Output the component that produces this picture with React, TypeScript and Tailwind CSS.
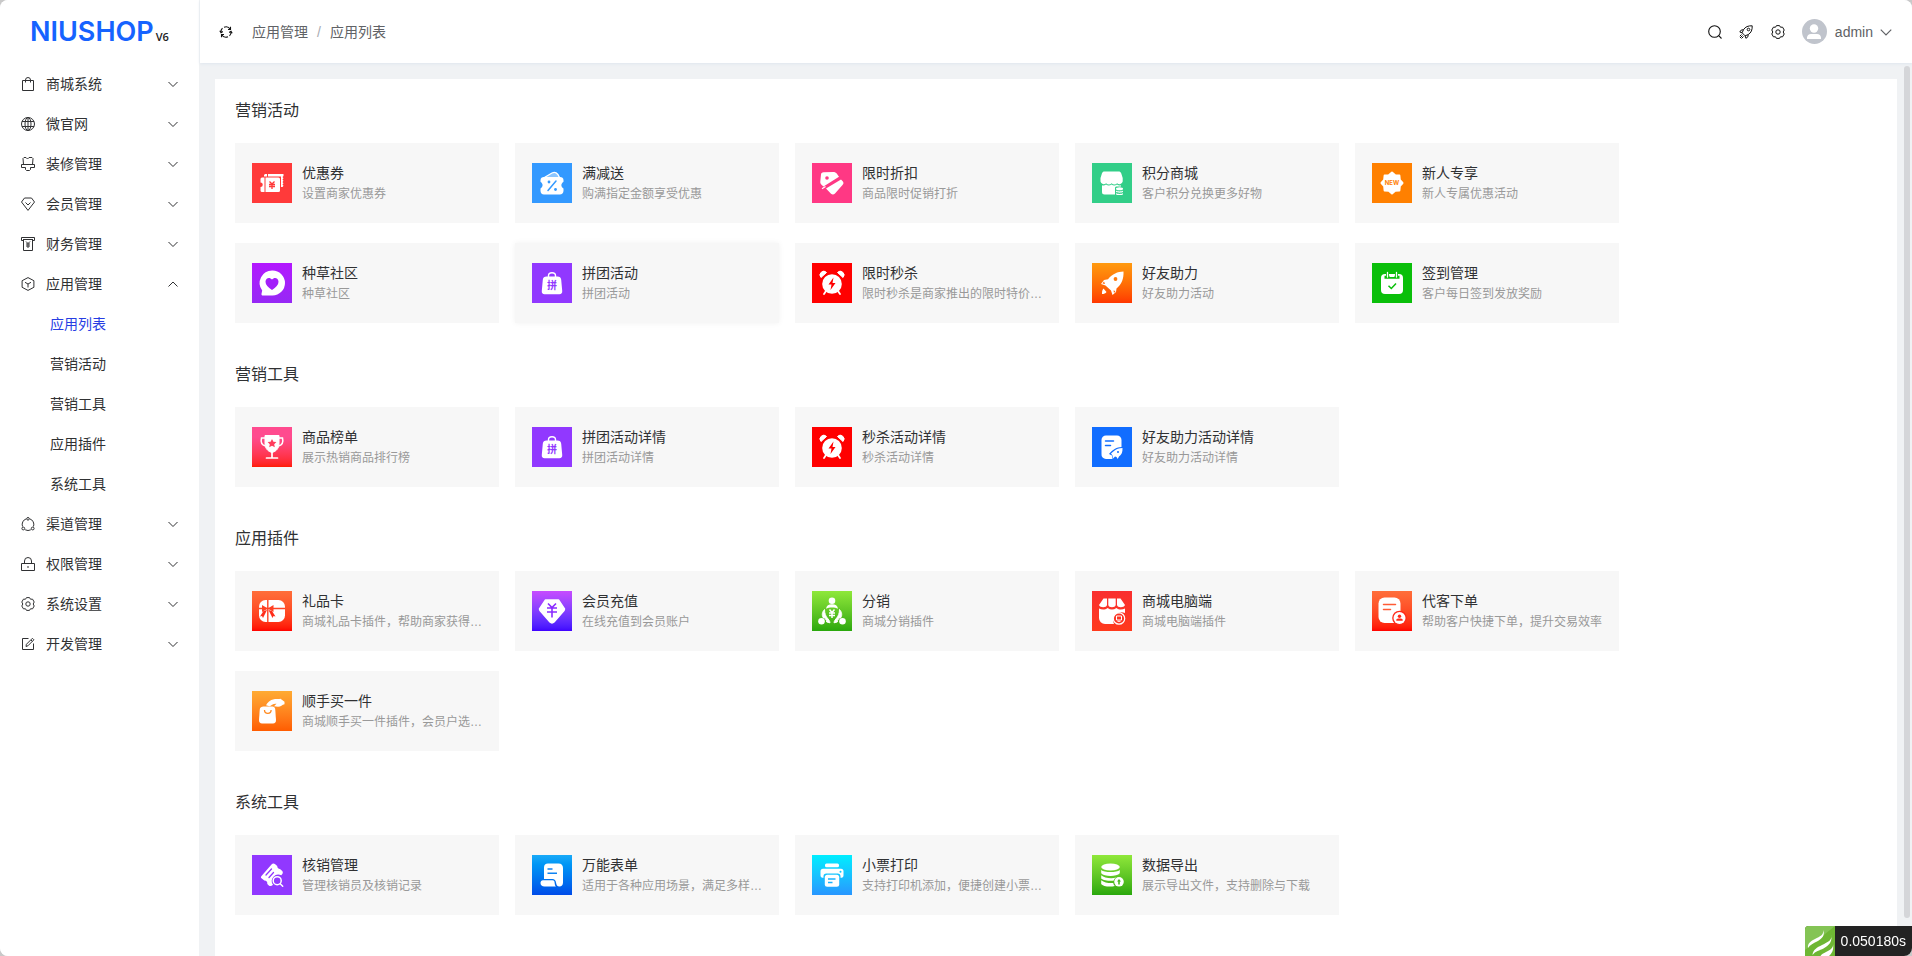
import type { ReactNode } from "react";
import clsx from "clsx";

type MenuItem = { label: string; icon: ReactNode; children?: string[] };
type AppItem = { title: string; desc: string; icon: ReactNode; raised?: boolean };
type Section = { title: string; items: AppItem[] };

/* ---------- line icons ---------- */

function LineIcon({ children, className = "size-[14px]" }: { children: ReactNode; className?: string }) {
    return (
        <svg
            viewBox="0 0 14 14"
            className={clsx("shrink-0", className)}
            fill="none"
            stroke="currentColor"
            strokeWidth="1"
            aria-hidden="true"
        >
            {children}
        </svg>
    );
}

const gear = (
    <>
        <path
            d="M5.500.6h3Q8.900 3 11.600 2.200L13.200 5Q11.200 7 13.200 9L11.600 11.800Q8.900 11 8.500 13.400h-3Q5.100 11 2.400 11.800L.8 9Q2.800 7 .8 5L2.400 2.200Q5.100 3 5.500.6z"
            strokeLinejoin="round"
        />
        <circle cx="7" cy="7" r="2.200" />
    </>
);

function Chevron({ up, className }: { up?: boolean; className?: string }) {
    return (
        <svg viewBox="0 0 12 12" className={clsx("shrink-0", className)} fill="none" stroke="currentColor" strokeWidth="1" aria-hidden="true">
            <path d={up ? "M1.500 8.500 6 4l4.500 4.500" : "M1.500 4 6 8.500 10.500 4"} />
        </svg>
    );
}

const menu: MenuItem[] = [
    {
        label: "商城系统",
        icon: <path d="M1.500 3.500h11v10h-11zM4.500 5.500V3a2.500 2.500 0 0 1 5 0v2.500" />,
    },
    {
        label: "微官网",
        icon: (
            <>
                <circle cx="7" cy="7" r="6.500" />
                <ellipse cx="7" cy="7" rx="3" ry="6.500" />
                <path d="M7 .5v13M1 4.500h12M1 9.500h12" />
            </>
        ),
    },
    {
        label: "装修管理",
        icon: <path d="M2.500 7.500l-.5-6 1-1h2l1.500 1.500L8 .5h3l1 1-.5 6M.5 7.500h13v3h-4v2l-1 1h-3l-1-1v-2h-4z" />,
    },
    {
        label: "会员管理",
        icon: <path d="M3.500 1h7l3 4L7 13.400.5 5zM4.500 5.500 7 8l2.500-2.500" strokeLinejoin="round" />,
    },
    {
        label: "财务管理",
        icon: <path d="M2.500 3.500h-2v-3h13v3h-2M2.500 2.500v11h9v-11M2 2.500h10M5 4.500l2 2 2-2M5 7h4M5 9h4M7 6.500v4.500" />,
    },
    {
        label: "应用管理",
        icon: <path d="M7 .6 12.900 3.700v6.600L7 13.400 1.100 10.300V3.700zM4 5.300l3 1.700 3-1.700M7 7v3.500" strokeLinejoin="round" />,
        children: ["应用列表", "营销活动", "营销工具", "应用插件", "系统工具"],
    },
    {
        label: "渠道管理",
        icon: (
            <>
                <path d="M5.300 1.800A6 6 0 0 0 1.500 9.500M8.700 1.800a6 6 0 0 1 3.800 7.700M4.200 12.800a6 6 0 0 0 5.600 0" />
                <circle cx="7" cy="1.800" r="1.300" />
                <circle cx="2.300" cy="11.500" r="1.400" />
                <circle cx="11.700" cy="11.500" r="1.400" />
            </>
        ),
    },
    {
        label: "权限管理",
        icon: <path d="M.5 6.500h13v7H.5zM3.500 6.500V4a3.500 3.500 0 0 1 7 0v2.500M7 9v2" />,
    },
    { label: "系统设置", icon: gear },
    {
        label: "开发管理",
        icon: <path d="M7.500 1.500h-6v11h11v-6M5 9.500l.4-2.200 6-6 1.500 1.500-6 6zM10 3l1.400 1.400" />,
    },
];

/* ---------- application tiles ---------- */

function Tile({ bg, children }: { bg: string; children: ReactNode }) {
    return (
        <svg viewBox="0 0 40 40" className={clsx("size-10 shrink-0", bg)} fill="#fff" aria-hidden="true">
            {children}
        </svg>
    );
}

const groupBuyIcon = (
    <Tile bg="bg-[#9138ff]">
        <path d="M16.500 14v-1.500a3.500 2.800 0 0 1 7 0V14" fill="none" stroke="#fff" strokeWidth="1.400" />
        <path d="M14.500 13.500h11c2.200 0 3.400 1.200 3.700 3.200l1 11c.3 2-.8 3.500-2.800 3.500H12.600c-2 0-3.100-1.500-2.800-3.500l1-11c.3-2 1.500-3.200 3.700-3.200z" />
        <text x="20" y="26" textAnchor="middle" fontSize="10" fontWeight="700" fill="#9138ff" className="font-['Noto_Sans_CJK_SC',sans-serif]">
            拼
        </text>
    </Tile>
);

const alarmIcon = (
    <Tile bg="bg-[#ff0000]">
        <path d="M9 14.500a3.500 3.500 0 0 1 5.500-5zM31 14.500a3.500 3.500 0 0 0-5.500-5z" stroke="#fff" strokeLinejoin="round" />
        <circle cx="20" cy="21" r="9.800" />
        <path d="m14 28-2 3M26 28l2 3" stroke="#fff" strokeWidth="1.800" strokeLinecap="round" />
        <path d="m21.500 14.500-5 7h3l-1 5.500 5-7h-3z" fill="#f00" />
    </Tile>
);

const sections: Section[] = [
    {
        title: "营销活动",
        items: [
            {
                title: "优惠券",
                desc: "设置商家优惠券",
                icon: (
                    <Tile bg="bg-[#ff3a3a]">
                        <path d="M12 13.500V12l1-1h2v2.500zM16 11h15.500v2l-1 1 1 1.300-1 1.200 1 1.300-1 1.200 1 1.300-1 1.200 1 1.300-1 1.200H29V13.500H16z" />
                        <path d="M10 14.500h2.500V29H10a1.500 1.500 0 0 1-1.500-1.500V24a2 2 0 0 0 0-4.500V16a1.500 1.500 0 0 1 1.500-1.500zM13.500 14.500h13A1.500 1.500 0 0 1 28 16v11.500a1.500 1.500 0 0 1-1.500 1.500h-13z" />
                        <path d="m17.500 18.500 2.500 2.500 2.500-2.500M17 21.500h6M17 23.500h6M20 21v5" fill="none" stroke="#ff3a3a" strokeWidth="1.300" />
                    </Tile>
                ),
            },
            {
                title: "满减送",
                desc: "购满指定金额享受优惠",
                icon: (
                    <Tile bg="bg-[#3399ff]">
                        <path d="m11.500 15 8.500-5c3-1.500 5.500-.5 7.500 4.500" fill="#8cc6ff" stroke="#fff" strokeWidth="1.300" />
                        <path d="M12 14h16c2 0 3.500 1.200 3.500 3.200v1.500c-2.800 2.300-2.800 4.600 0 6.800v2.300c0 2.200-1.500 3.700-3.700 3.700H12c-2.200 0-3.500-1.500-3.500-3.700v-2.300c2.800-2.200 2.800-4.500 0-6.800v-1.500c0-2 1.500-3.200 3.500-3.200z" />
                        <path d="m16 27.500 8-9.500" stroke="#39f" strokeWidth="1.500" strokeLinecap="round" />
                        <circle cx="17" cy="19" r="1.400" fill="#39f" />
                        <circle cx="23.500" cy="26.500" r="1.400" fill="#39f" />
                    </Tile>
                ),
            },
            {
                title: "限时折扣",
                desc: "商品限时促销打折",
                icon: (
                    <Tile bg="bg-[#ff3884]">
                        <path d="M11.500 9.200 21 9c1.500 0 2.500.3 3.500 1.300l2.500 3.500-15.500 9.700-2-1.700c-1-1-1.300-2-1.200-3.300l.7-7c.1-1.400 1-2.200 2.500-2.300zM14 25.500l15-9 1.700 1.700c1.100 1.400 1 2.500-.2 3.800L23 30.500c-1.200 1.200-2.700 1.300-4 .2z" />
                        <circle cx="15" cy="15" r="1.800" fill="#ff3884" />
                        <path d="m10 25.700 3.500-2.200" stroke="#fff" strokeWidth="1.200" />
                    </Tile>
                ),
            },
            {
                title: "积分商城",
                desc: "客户积分兑换更多好物",
                icon: (
                    <Tile bg="bg-[#32ce88]">
                        <path d="M12.500 8.500h14c1.400 0 2.200.5 2.700 1.700l1.500 4.800v3.500a3.300 3.300 0 0 1-5.600 1.700 3.800 3.800 0 0 1-5.500 0 3.800 3.800 0 0 1-5.500 0 3.300 3.300 0 0 1-5.600-1.700V15l1.500-4.800c.5-1.200 1.200-1.700 2.500-1.700z" />
                        <path d="M10 22.300c1.500.5 2.800.2 4-.8 1.800 1.400 3.700 1.400 5.500 0 1.800 1.400 3.700 1.400 5.500 0 1.200 1 2.600 1.300 4 .8v1.200h-5l-1 1v7H12.500A2.500 2.500 0 0 1 10 29z" />
                        <ellipse cx="27.500" cy="25.700" rx="3.500" ry="1.500" />
                        <path d="M24 27.500c1 1.200 6 1.200 7 0v1.300c-1 1.200-6 1.200-7 0zM24 30c1 1.200 6 1.200 7 0v1.200c-1 1.200-6 1.200-7 0z" />
                    </Tile>
                ),
            },
            {
                title: "新人专享",
                desc: "新人专属优惠活动",
                icon: (
                    <Tile bg="bg-[#ff8000]">
                        <path
                            d="M20 9.500 23.200 12.200 27.400 12.600 27.800 16.800 30.500 20 27.800 23.200 27.400 27.400 23.200 27.800 20 30.500 16.800 27.800 12.600 27.400 12.200 23.200 9.500 20 12.200 16.800 12.600 12.600 16.800 12.200z"
                            stroke="#fff"
                            strokeWidth="2"
                            strokeLinejoin="round"
                        />
                        <text x="20" y="22" textAnchor="middle" fontSize="6" fontWeight="700" fill="#ff8000" className="font-['Inter',sans-serif]">
                            NEW
                        </text>
                    </Tile>
                ),
            },
            {
                title: "种草社区",
                desc: "种草社区",
                icon: (
                    <Tile bg="bg-linear-to-b from-[#b316ff] to-[#9628f5]">
                        <path d="M20.500 7.500a12.500 12.500 0 0 1 0 25H11c-1.200 0-1.700-.7-1.500-1.800l.7-3.200A12.500 12.500 0 0 1 20.500 7.500z" />
                        <path d="M20 27c-4-2.700-6.500-5.200-6.500-8.300 0-4 4.300-5 6.500-2.200 2.200-2.800 6.500-1.800 6.500 2.200 0 3.100-2.500 5.600-6.500 8.300z" fill="#a31ffa" />
                    </Tile>
                ),
            },
            { title: "拼团活动", desc: "拼团活动", icon: groupBuyIcon, raised: true },
            { title: "限时秒杀", desc: "限时秒杀是商家推出的限时特价…", icon: alarmIcon },
            {
                title: "好友助力",
                desc: "好友助力活动",
                icon: (
                    <Tile bg="bg-linear-to-b from-[#ff9a0f] to-[#ff3600]">
                        <path d="M31.500 8.500c.3 7-1.500 12.500-7 17l-.5 3.500-3.500 3-1.500-4.500-5.500-5-4.500-1.500 3-4 4-.8c4.500-5.400 9.500-7.500 15.500-7.700z" />
                        <circle cx="23.500" cy="16" r="1.900" fill="#ff7a0b" />
                        <path d="m12 18.500-1.500 2 2.500.5zM21.500 27.500l.5 2.500 1.500-2z" fill="#ff6408" />
                        <path d="M11.500 25.500c-1.500 1.500-1.500 3.500-1.500 5.500 2 0 3.500-.5 4.500-2z" />
                    </Tile>
                ),
            },
            {
                title: "签到管理",
                desc: "客户每日签到发放奖励",
                icon: (
                    <Tile bg="bg-[#0abf0a]">
                        <path d="M13 11h14a4 4 0 0 1 4 4v12a4 4 0 0 1-4 4H13a4 4 0 0 1-4-4V15a4 4 0 0 1 4-4z" />
                        <path d="M12.500 14.200h15M15.500 10v4M24.500 10v4" stroke="#0abf0a" strokeWidth="3" />
                        <path d="M17.500 13h5" stroke="#fff" strokeWidth="2" />
                        <path d="M15.500 9.500V14M24.500 9.500V14" stroke="#fff" strokeWidth="1.300" strokeLinecap="round" />
                        <path d="m16.500 22.800 2.800 2.700 4.700-5" fill="none" stroke="#0abf0a" strokeWidth="1.500" />
                    </Tile>
                ),
            },
        ],
    },
    {
        title: "营销工具",
        items: [
            {
                title: "商品榜单",
                desc: "展示热销商品排行榜",
                icon: (
                    <Tile bg="bg-linear-to-b from-[#ff4b8f] from-25% to-[#ff1c00]">
                        <path d="M13 8.500h14v8c0 5-3 8-7 9-4-1-7-4-7-9z" stroke="#fff" strokeLinejoin="round" />
                        <path d="M13 11H9.500c-1 4 .5 7 4 8M27 11h3.500c1 4-.5 7-4 8" fill="none" stroke="#fff" strokeWidth="1.500" />
                        <path d="M20 25v5.500M14.500 31h11" stroke="#fff" strokeWidth="1.700" strokeLinecap="round" />
                        <path d="m20 12 1.400 2.700 3 .4-2.200 2.100.6 3-2.800-1.400-2.800 1.400.6-3-2.200-2.100 3-.4z" fill="#ff3d5e" />
                    </Tile>
                ),
            },
            { title: "拼团活动详情", desc: "拼团活动详情", icon: groupBuyIcon },
            { title: "秒杀活动详情", desc: "秒杀活动详情", icon: alarmIcon },
            {
                title: "好友助力活动详情",
                desc: "好友助力活动详情",
                icon: (
                    <Tile bg="bg-[#116dff]">
                        <path d="M14 8.500h11a4.500 4.500 0 0 1 4.500 4.500v7c-5 .2-8 2-12.500 7l3 1.500.5 3.500H14A4.500 4.500 0 0 1 9.500 27V13A4.500 4.500 0 0 1 14 8.500z" />
                        <path d="M13.500 14h8M13.500 18.500h5" stroke="#116dff" strokeWidth="1.500" strokeLinecap="round" />
                        <path d="M30.500 21c.3 4-1 7-3.500 8.500l-1.300 2.500-1.200-2-1.500-.5-2 2-.5-3-1.500-2 3-2.500c2-2 5-3 8.500-3z" />
                        <circle cx="26" cy="25" r="1" fill="#116dff" />
                    </Tile>
                ),
            },
        ],
    },
    {
        title: "应用插件",
        items: [
            {
                title: "礼品卡",
                desc: "商城礼品卡插件，帮助商家获得…",
                icon: (
                    <Tile bg="bg-linear-to-b from-[#ff6e3a] to-[#ff0000]">
                        <rect x="7" y="9" width="26" height="22" rx="6.500" />
                        <path d="M7 17.500h26M15.800 9v22" stroke="#ff4425" strokeWidth="1.400" />
                        <path d="m10 14 5.800 3.500L10 21zM21.500 14l-5.700 3.500 5.700 3.500z" fill="#ff4023" />
                        <path d="m15 19-4 8-1-2-2 .5 3.500-5.500zM16.500 19l4 8 1-2 2 .5-3.500-5.500z" fill="#ff2d1a" />
                    </Tile>
                ),
            },
            {
                title: "会员充值",
                desc: "在线充值到会员账户",
                icon: (
                    <Tile bg="bg-linear-to-b from-[#c74bff] to-[#4000ff]">
                        <path d="M13.500 9h13l6 9-.5 1.500L22 31c-1.300 1.200-2.700 1.200-4 0L8 19.500 7.500 18z" stroke="#fff" strokeWidth="1.500" strokeLinejoin="round" />
                        <path d="m16 12.500 4 4 4-4M15 17h10M15 21h10M20 16.500v10" fill="none" stroke="#8a2cff" strokeWidth="1.600" />
                    </Tile>
                ),
            },
            {
                title: "分销",
                desc: "商城分销插件",
                icon: (
                    <Tile bg="bg-linear-to-b from-[#8fe83a] to-[#29a80d]">
                        <circle cx="20" cy="9.700" r="3.300" />
                        <path d="M14 17.800c.5-3.300 2.500-4.500 6-4.500s5.500 1.200 6 4.500c-3-1.700-9-1.700-12 0z" />
                        <circle cx="9.500" cy="30.300" r="3.300" />
                        <circle cx="30.500" cy="30.300" r="3.300" />
                        <path
                            d="M12.500 18.500c-2.500 2.700-2.700 5.500-1.500 8 2.300.5 3.500 2 3.700 4.500l3.300.8c-.3-4-5.500-5-5.500-13.300zM27.500 18.500c2.500 2.700 2.700 5.500 1.500 8-2.300.5-3.500 2-3.700 4.500l-3.300.8c.3-4 5.500-5 5.500-13.300z"
                            stroke="#fff"
                            strokeWidth="1"
                        />
                        <path d="m17.500 18.500 2.500 3 2.500-3M17 22h6M17 24.500h6M20 21.500V27" fill="none" stroke="#fff" strokeWidth="1.500" />
                    </Tile>
                ),
            },
            {
                title: "商城电脑端",
                desc: "商城电脑端插件",
                icon: (
                    <Tile bg="bg-linear-to-b from-[#f92f2f] to-[#ff3a1c]">
                        <path d="M11.500 7.500H15v6.500c-.5 3-7 3-8 0zM16.300 7.500h7.400v6.500c-.5 3-7 3-7.400 0zM25 7.500h3.500L33 14c-1 3-7.500 3-8 0z" />
                        <path d="M7 17.500c3 1.500 6 1.500 8.600-.5 3 2 5.800 2 8.800 0 2.600 2 5.600 2 8.600.5V22a8.500 8.500 0 0 0-11 11h-9a6 6 0 0 1-6-6z" />
                        <circle cx="27" cy="27.500" r="5.700" fill="#fc3525" stroke="#fff" strokeWidth="1.200" />
                        <path d="M24.500 25h5v4h-5zM25.500 30.300h3" fill="none" stroke="#fff" strokeWidth="1" />
                    </Tile>
                ),
            },
            {
                title: "代客下单",
                desc: "帮助客户快捷下单，提升交易效率",
                icon: (
                    <Tile bg="bg-linear-to-b from-[#ff6e3a] to-[#ff0000]">
                        <rect x="6.500" y="6.500" width="22" height="25.500" rx="6" />
                        <path d="M11.500 13.500h12M11.500 18.500h7" stroke="#ff5b35" strokeWidth="1.500" strokeLinecap="round" />
                        <circle cx="27.500" cy="27" r="7.300" fill="#ff2919" />
                        <circle cx="27.500" cy="27" r="6" />
                        <circle cx="27.500" cy="25.200" r="1.700" fill="#ff2919" />
                        <path d="M24.300 29.700v-1c0-1.500 6.400-1.500 6.400 0v1z" fill="#ff2919" />
                    </Tile>
                ),
            },
            {
                title: "顺手买一件",
                desc: "商城顺手买一件插件，会员户选…",
                icon: (
                    <Tile bg="bg-linear-to-b from-[#ffab33] to-[#ff5c00]">
                        <path d="M11.500 15.500h9c1.500 0 2.500 1 2.700 2.500l.8 11c.1 2-1 3.500-3 3.500H10c-2 0-3.100-1.500-3-3.500l.8-11c.2-1.500 1.700-2.500 3.700-2.500z" />
                        <path d="M12.500 19a3.300 3.300 0 0 0 6.600 0" fill="none" stroke="#ff8a20" strokeWidth="1.300" />
                        <path d="M14 14.200c1.500-3 4-5.200 8-6 2.500-.5 4.500.3 6.500-.5l4 3v2.500c-2.500.5-3.500 2.500-6.500 2.500l-4-.5 2.500-2.500c-3-.5-5.500 2-7 2.500z" />
                    </Tile>
                ),
            },
        ],
    },
    {
        title: "系统工具",
        items: [
            {
                title: "核销管理",
                desc: "管理核销员及核销记录",
                icon: (
                    <Tile bg="bg-[#9138ff]">
                        <path d="m9.500 21 10-11.500c1.200-1.200 2.500-1.200 3.700-.2l2 1.700c.1 1.800 1 2.700 2.800 3l2 1.800c1 1 1.100 2 .3 3.300l-1 1.200a6.500 6.500 0 0 0-8.300 9.500c-1.500 1.500-3 1.700-4.200.6l-1.500-1.500c.3-2.200-.8-3.400-3-3.500l-2.500-1.800c-1-.8-1.200-1.500-.3-2.600z" />
                        <path d="m14 20 5.500-6M17 22.500l4.500-5" stroke="#9138ff" strokeWidth="1.300" strokeLinecap="round" />
                        <circle cx="25.200" cy="25.700" r="4" fill="#9138ff" stroke="#fff" strokeWidth="1.500" />
                        <path d="m28.200 28.700 2.500 2.500" stroke="#fff" strokeWidth="1.500" strokeLinecap="round" />
                    </Tile>
                ),
            },
            {
                title: "万能表单",
                desc: "适用于各种应用场景，满足多样…",
                icon: (
                    <Tile bg="bg-linear-to-b from-[#19aaf8] to-[#004be8]">
                        <path d="M16 8.500h10.500c3 0 4.500 1.800 4.500 4.500v14.500c0 2.800-1.500 4-3.500 4-2.500 0-3-1.500-3.500-4-.3-2.200-1.500-3.500-3.500-3.500H12V12.500c0-2.500 1.500-4 4-4z" />
                        <path d="M11 25.200h9.500c1.800 0 2 1.300 2.200 3 .1 1.500.5 2.500 1.300 3.300H12.500c-2.500 0-4-1.300-4-3.500 0-1.700 1-2.800 2.500-2.800z" />
                        <path d="M15.500 14h5M15.500 18.300h9.500" stroke="#0f83f2" strokeWidth="1.400" />
                    </Tile>
                ),
            },
            {
                title: "小票打印",
                desc: "支持打印机添加，便捷创建小票…",
                icon: (
                    <Tile bg="bg-linear-to-b from-[#00eeff] to-[#2896ff]">
                        <rect x="13" y="8.500" width="14" height="3.800" rx="1.500" />
                        <path d="M11 13.800h18a2.500 2.500 0 0 1 2.500 2.500v4.200c0 1.500-1 2.300-3 2.300v-1.500c0-2-1-2.800-2.800-2.800H14.300c-1.800 0-2.800.8-2.800 2.800v1.500c-2 0-3-.8-3-2.300v-4.200a2.500 2.500 0 0 1 2.500-2.500z" />
                        <rect x="12.800" y="19.800" width="14.400" height="12" rx="2.500" />
                        <path d="M16 24h7.500M16 27.500h4.500" stroke="#18b2ff" strokeWidth="1.400" />
                        <circle cx="28.500" cy="16.700" r="1" fill="#10c9ff" />
                    </Tile>
                ),
            },
            {
                title: "数据导出",
                desc: "展示导出文件，支持删除与下载",
                icon: (
                    <Tile bg="bg-linear-to-b from-[#8fe83a] to-[#29a80d]">
                        <ellipse cx="18.500" cy="12" rx="9.300" ry="3.500" />
                        <path d="M9.200 15c3 2.800 15.600 2.800 18.600 0v3.300c-3 3.500-15.600 3.500-18.600 0zM9.200 20.300c3 3 11 3.500 15 2.200a6 6 0 0 0-2.700 3.200c-4 .4-10.300-.2-12.300-2.200zM9.200 25.300c3 2.500 8 3 12 2.700.2 1.300.8 2.300 1.600 3-4.500 1.200-12.100.5-13.600-2z" />
                        <circle cx="27" cy="26.800" r="4.800" />
                        <path d="m27 24-2 2.500h1.200v3h1.600v-3H29z" fill="#45b81c" />
                    </Tile>
                ),
            },
        ],
    },
];

function Sidebar() {
    return (
        <aside className="flex w-[200px] shrink-0 flex-col border-r border-[#f0f2f4] bg-white">
            <div className="flex h-16 shrink-0 items-center pl-[30px]">
                <a href="#" className="flex items-baseline gap-0.5">
                    <span className="font-['Inter',sans-serif] text-[27px] leading-8 font-semibold text-[#1663ff]">NIUSHOP</span>
                    <span className="font-['Open_Sans',sans-serif] text-[11px] font-semibold text-[#222]">V6</span>
                </a>
            </div>
            <nav>
                {menu.map((item) => (
                    <div key={item.label}>
                        <button type="button" className="flex h-10 w-full items-center pr-5 pl-[21px] text-left">
                            <LineIcon>{item.icon}</LineIcon>
                            <span className="ml-[11px] flex-1">{item.label}</span>
                            <Chevron up={!!item.children} className="size-3" />
                        </button>
                        {item.children?.map((child, i) => (
                            <a
                                key={child}
                                href="#"
                                className={clsx("flex h-10 items-center pl-[50px]", i === 0 && "text-[#273de3]")}
                            >
                                {child}
                            </a>
                        ))}
                    </div>
                ))}
            </nav>
        </aside>
    );
}

function Header() {
    return (
        <header className="relative z-10 flex h-[63px] shrink-0 items-center justify-between bg-white pr-[19px] pl-[19px] shadow-[0_1px_3px_#dfe6ee]">
            <div className="flex items-center">
                <button type="button" aria-label="刷新" className="text-[#111]">
                    <LineIcon>
                        <path
                            d="M2 7.500A5 5 0 0 1 3.500 3.200M5 2.200a5.200 5.200 0 0 1 6.300 2.100M12 6.500a5 5 0 0 1-1.500 4.300M9 11.800a5.200 5.200 0 0 1-6.300-2.100M.8 5.700 2 7.700l1.900-1.200M13.200 8.300 12 6.300l-1.900 1.200M11.500 1.800v2.700H9M2.500 12.200V9.500H5"
                            strokeWidth="1.100"
                        />
                    </LineIcon>
                </button>
                <nav aria-label="breadcrumb" className="ml-[19px] flex items-center text-[#606266]">
                    <a href="#">应用管理</a>
                    <span className="mx-[9px] text-[#a8abb2]">/</span>
                    <span>应用列表</span>
                </nav>
            </div>
            <div className="flex items-center text-[#111]">
                <button type="button" aria-label="搜索">
                    <LineIcon>
                        <circle cx="6.500" cy="6.500" r="5.800" strokeWidth="1.100" />
                        <path d="m10.700 10.700 2.800 2.800" strokeWidth="1.100" />
                    </LineIcon>
                </button>
                <button type="button" aria-label="快捷入口" className="ml-[17px]">
                    <LineIcon>
                        <path d="M13.200.8c.2 4-1 7-4 8.800l-.3 2.200-2 1.500-.8-2.500-3-3L.8 7l1.500-2 2.200-.3C6.300 1.800 9.200.6 13.200.8zM4.500 4.700 3.100 7.800M9.200 9.600l-3.100 1.200M2.500 9.500.8 11.200M4.500 11.500l-2 2M3.500 10.500 1 13" />
                        <circle cx="9.500" cy="4.500" r="1.300" />
                    </LineIcon>
                </button>
                <button type="button" aria-label="设置" className="ml-[18px]">
                    <LineIcon>{gear}</LineIcon>
                </button>
                <button type="button" className="ml-[17px] flex items-center text-[#606266]">
                    <svg viewBox="0 0 25 25" className="size-[25px]" aria-hidden="true">
                        <circle cx="12.500" cy="12.500" r="12.500" fill="#c0c4cc" />
                        <circle cx="12" cy="9.500" r="4.200" fill="#fff" />
                        <path d="M5 20v-1.500a4 4 0 0 1 4-3.500h6a4 4 0 0 1 4 3.500V20z" fill="#fff" />
                    </svg>
                    <span className="mr-1.5 ml-2">admin</span>
                    <Chevron className="size-[14px]" />
                </button>
            </div>
        </header>
    );
}

function AppCard({ item }: { item: AppItem }) {
    return (
        <a
            href="#"
            className={clsx(
                "flex h-20 w-[264px] items-center border border-transparent bg-[#f7f7f7] pr-3 pl-4",
                item.raised && "shadow-[0_0_6px_rgba(0,0,0,0.06)]",
            )}
        >
            {item.icon}
            <div className="ml-2.5 min-w-0 flex-1">
                <div className="truncate leading-[22px]">{item.title}</div>
                <div className="truncate text-xs leading-5 text-[#999]">{item.desc}</div>
            </div>
        </a>
    );
}

function TraceBadge() {
    return (
        <button type="button" className="fixed right-0 bottom-0 z-20 flex h-[30px] items-center overflow-hidden rounded-tl rounded-br-lg bg-[#232323] text-white">
            <svg viewBox="0 0 30 30" className="size-[30px]" aria-hidden="true">
                <path d="M0 0h30v30H0z" fill="#6eb734" />
                <path d="M0 0h30L0 24z" fill="#84c455" />
                <path
                    d="M18 4c1 5-3 6.500-8 9-4 2-7.500 4-7 9 2-3.500 5.500-4.500 9-6.500 5-2.800 8.500-6 6-11.500zM26 8c2 6-3 8-9 11-5 2.500-9 4.500-9.500 10 3-4 7-4.500 11-6.500 5.500-3 9.500-7 7.500-14.500zM28 18c.5 4-3 6-7 8-2.500 1.200-4.500 2.200-5.500 4H24c3-2.500 5-6.500 4-12z"
                    fill="#fff"
                />
            </svg>
            <span className="pr-1.5 pl-1.5">0.050180s</span>
        </button>
    );
}

export default function App() {
    return (
        <div className="h-screen bg-[#c9c9c9] font-['Liberation_Sans','Noto_Sans_CJK_SC',sans-serif] text-sm text-[#303133]">
            <div className="flex h-full overflow-hidden rounded-lg bg-[#f0f2f4]">
                <Sidebar />
                <div className="relative flex min-w-0 flex-1 flex-col">
                    <Header />
                    <main className="flex-1 overflow-y-auto px-[15px] pt-4 [scrollbar-width:none]">
                        <div className="min-h-full bg-white px-5 pb-5">
                            {sections.map((section) => (
                                <section key={section.title} className="pt-5 pb-5">
                                    <h2 className="mb-5 text-base leading-6">{section.title}</h2>
                                    <div className="flex max-w-[1400px] flex-wrap gap-x-4 gap-y-5">
                                        {section.items.map((item) => (
                                            <AppCard key={item.title} item={item} />
                                        ))}
                                    </div>
                                </section>
                            ))}
                        </div>
                    </main>
                    <div className="absolute top-[66px] right-0.5 bottom-[38px] w-1.5 rounded-full bg-[#d5d6d9]" />
                </div>
            </div>
            <TraceBadge />
        </div>
    );
}
